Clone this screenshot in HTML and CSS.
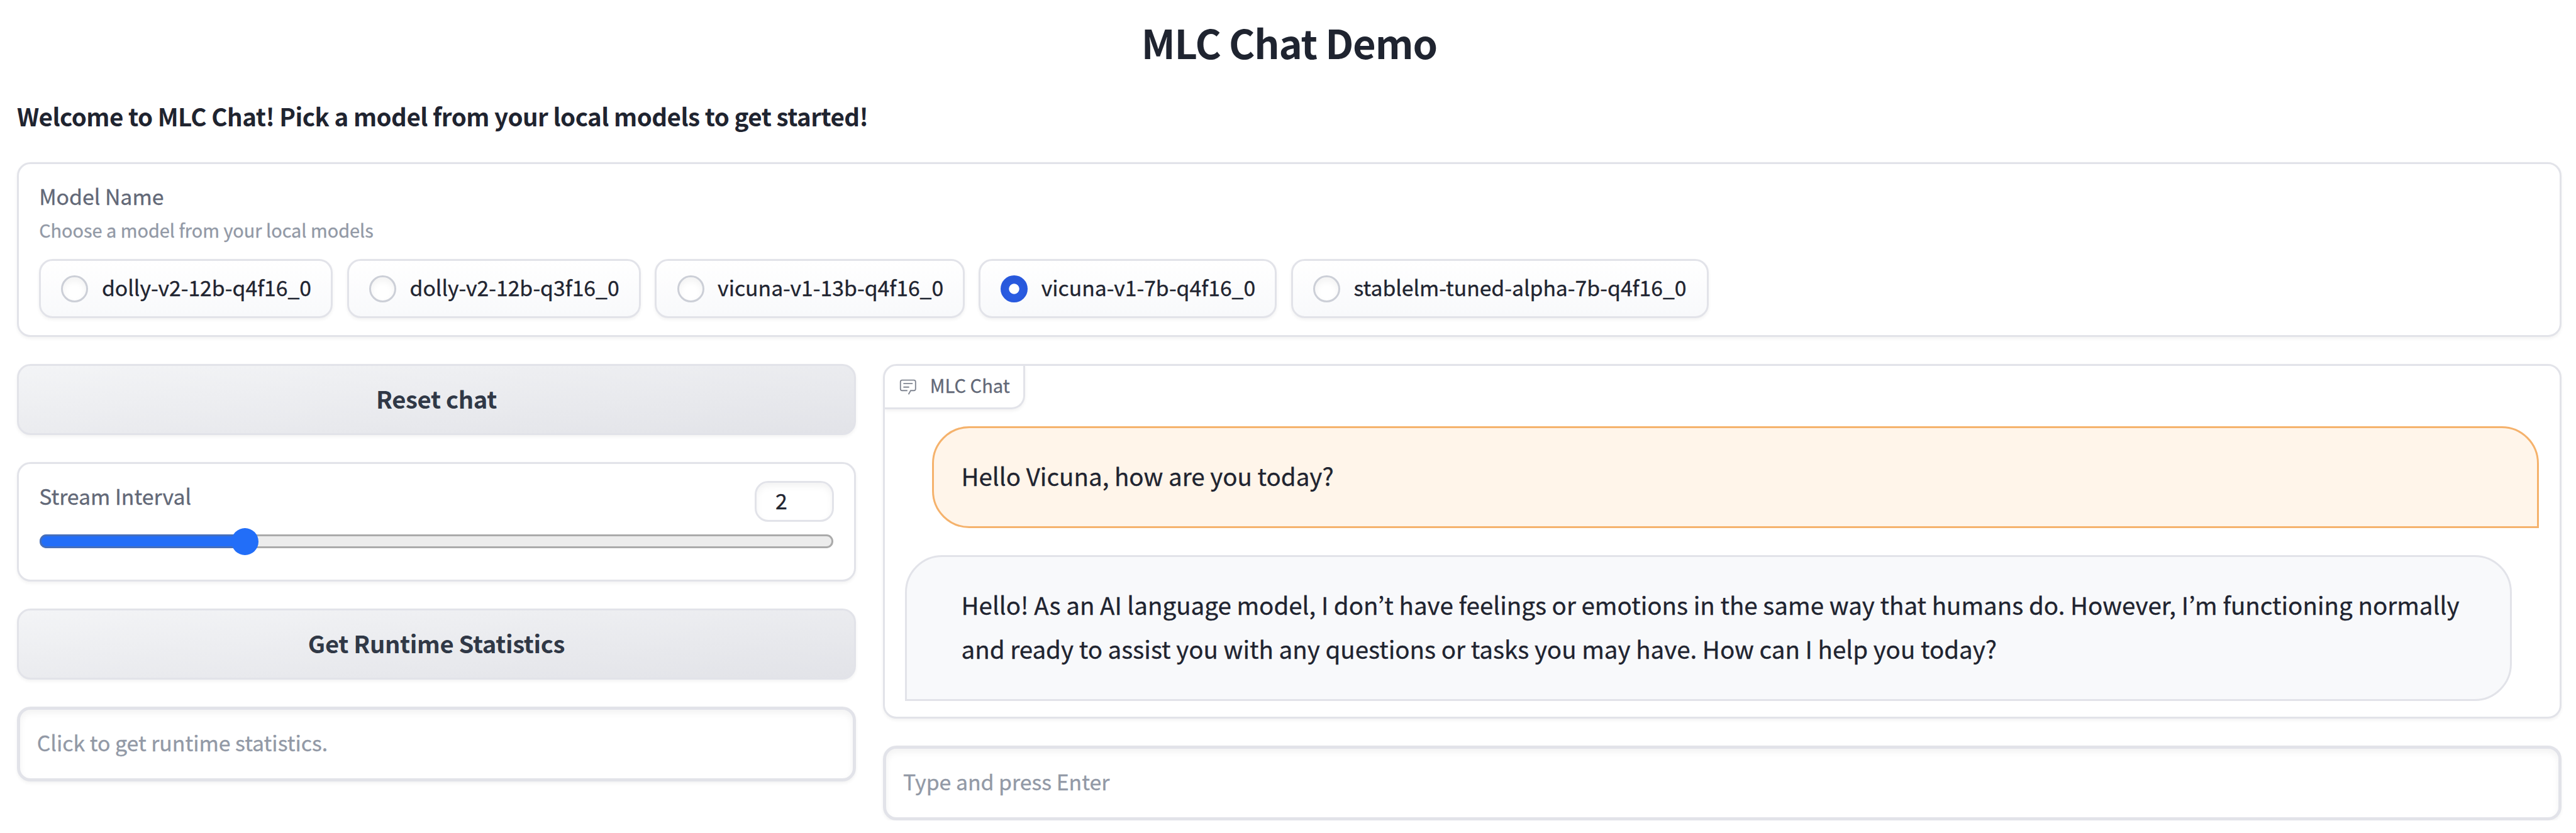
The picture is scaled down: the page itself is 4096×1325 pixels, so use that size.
FILE: index.html
```html
<!DOCTYPE html>
<html lang="en">
<head>
<meta charset="utf-8">
<title>MLC Chat Demo</title>
<link rel="stylesheet" href="styles.css">
</head>
<body>
<h1 class="title">MLC Chat Demo</h1>
<h3 class="welcome">Welcome to MLC Chat! Pick a model from your local models to get started!</h3>

<section class="panel models">
  <div class="label">Model Name</div>
  <div class="info">Choose a model from your local models</div>
  <div class="options">
    <div class="option w1"><span class="radio"></span><span class="name">dolly-v2-12b-q4f16_0</span></div>
    <div class="option w1"><span class="radio"></span><span class="name">dolly-v2-12b-q3f16_0</span></div>
    <div class="option w2"><span class="radio"></span><span class="name">vicuna-v1-13b-q4f16_0</span></div>
    <div class="option w3"><span class="radio checked"></span><span class="name">vicuna-v1-7b-q4f16_0</span></div>
    <div class="option w4"><span class="radio"></span><span class="name">stablelm-tuned-alpha-7b-q4f16_0</span></div>
  </div>
</section>

<main class="columns">
  <div class="side">
    <div class="button">Reset chat</div>
    <div class="panel slider">
      <div class="slider-head">
        <div class="label">Stream Interval</div>
        <div class="number">2</div>
      </div>
      <div class="track"><div class="fill"></div><div class="thumb"></div></div>
    </div>
    <div class="button">Get Runtime Statistics</div>
    <div class="textbox">Click to get runtime statistics.</div>
  </div>

  <div class="chat-col">
    <div class="panel chat">
      <div class="tag">
        <svg class="tag-icon" viewBox="0 0 32 32" fill="currentColor">
          <path d="M17.74 30L16 29l4-7h6a2 2 0 0 0 2-2V8a2 2 0 0 0-2-2H6a2 2 0 0 0-2 2v12a2 2 0 0 0 2 2h9v2H6a4 4 0 0 1-4-4V8a4 4 0 0 1 4-4h20a4 4 0 0 1 4 4v12a4 4 0 0 1-4 4h-4.84Z"/>
          <path d="M8 10h16v2H8zm0 6h10v2H8z"/>
        </svg>
        <span class="tag-text">MLC Chat</span>
      </div>
      <div class="messages">
        <div class="bubble user">Hello Vicuna, how are you today?</div>
        <div class="bubble bot">Hello! As an AI language model, I don’t have feelings or emotions in the same way that humans do. However, I’m functioning normally<br>and ready to assist you with any questions or tasks you may have. How can I help you today?</div>
      </div>
    </div>
    <div class="textbox">Type and press Enter</div>
  </div>
</main>
</body>
</html>
```
FILE: styles.css
```css
* { box-sizing: border-box; }

html { font-size: 8.96673px; }

body {
  margin: 0;
  padding: 2.2rem 2.6rem 0 3rem;
  background: #fff;
  color: #1f2430;
  font-family: "Noto Sans CJK KR", "Noto Sans", sans-serif;
  -webkit-text-stroke: 0.35px currentColor;
  overflow: hidden;
}

.title {
  margin: 0;
  font-size: 7.05rem;
  font-weight: 700;
  line-height: 10.4rem;
  letter-spacing: -0.13rem;
  text-align: center;
  -webkit-text-stroke: 0;
}

.welcome {
  margin: 5rem 0 5.2rem;
  font-size: 4.3rem;
  font-weight: 700;
  line-height: 6rem;
  letter-spacing: -0.06rem;
  -webkit-text-stroke: 0;
}

.panel {
  background: #fff;
  border: 3px solid #e2e3e9;
  border-radius: 2.4rem;
  box-shadow: 0 0.3rem 0.6rem rgb(0 0 0 / 0.05);
}

.label {
  color: #626877;
  font-size: 3.77rem;
  line-height: 5rem;
}

.models {
  height: 31rem;
  padding: 3.2rem 3.6rem 0;
}

.info {
  margin-top: 1.1rem;
  color: #9299a6;
  font-size: 3.22rem;
  line-height: 4.6rem;
}

.options {
  display: flex;
  gap: 2.5rem;
  margin-top: 2.95rem;
}

.option {
  display: flex;
  align-items: center;
  height: 10.5rem;
  padding-left: 3.6rem;
  border: 3px solid #e2e3e9;
  border-radius: 2.4rem;
  background: linear-gradient(to bottom, #fff, #f8f9fb);
  box-shadow: 0 0.3rem 0.6rem rgb(0 0 0 / 0.05);
  font-size: 3.76rem;
  white-space: nowrap;
}

.w1 { width: 52.1rem; }
.w2 { width: 54.9rem; }
.w3 { width: 52.9rem; }
.w4 { width: 74.1rem; }

.name {
  padding-bottom: 0.5rem;
  line-height: 5.4rem;
}

.radio {
  flex: none;
  width: 4.8rem;
  height: 4.8rem;
  margin-right: 2.4rem;
  border: 3px solid #cccfd7;
  border-radius: 50%;
  background: #fff;
  box-shadow: inset 0 0.6rem 1.2rem rgb(0 0 0 / 0.05);
}

.radio.checked {
  border-color: #2859de;
  background: radial-gradient(circle, #fff 0.86rem, #2a5ce2 0.96rem);
}

.columns {
  display: grid;
  grid-template-columns: 148.8rem 297.6rem;
  gap: 4.8rem;
  align-items: start;
  margin-top: 4.8rem;
}

.side,
.chat-col {
  display: flex;
  flex-direction: column;
  gap: 4.8rem;
}

.button {
  height: 12.6rem;
  border: 3px solid #e2e3e9;
  border-radius: 2.4rem;
  background: linear-gradient(to bottom right, #f3f4f6, #e2e3e8);
  box-shadow: 0 0.3rem 0.6rem rgb(0 0 0 / 0.05);
  color: #303846;
  font-size: 4.26rem;
  font-weight: 700;
  line-height: 11.5rem;
  letter-spacing: -0.04rem;
  text-align: center;
  -webkit-text-stroke: 0;
}

.slider {
  height: 21.2rem;
  padding: 3rem 3.6rem 0;
}

.slider-head {
  display: flex;
  justify-content: space-between;
  align-items: flex-start;
}

.slider-head .label { margin-top: 0.2rem; }

.number {
  width: 14rem;
  height: 7.2rem;
  padding-left: 3.3rem;
  border: 3px solid #e2e3e9;
  border-radius: 2.4rem;
  box-shadow: inset 0 0.6rem 1.2rem rgb(0 0 0 / 0.05);
  font-size: 3.78rem;
  line-height: 6.3rem;
}

.track {
  position: relative;
  height: 2.4rem;
  margin-top: 2.3rem;
  margin-left: 0.1rem;
  margin-right: 0.1rem;
  border: 3px solid #aaa;
  border-radius: 1.2rem;
  background: #ececec;
}

.fill {
  position: absolute;
  left: -3px;
  top: -3px;
  bottom: -3px;
  width: 36.4rem;
  border: 3px solid #456fbc;
  border-right: 0;
  border-radius: 1.2rem 0 0 1.2rem;
  background: #226ef8;
}

.thumb {
  position: absolute;
  left: calc(34rem - 3px);
  top: calc(-1.2rem - 3px);
  width: 4.8rem;
  height: 4.8rem;
  border-radius: 50%;
  background: #226ef8;
}

.textbox {
  height: 13.2rem;
  padding-left: 3rem;
  border: 0.6rem solid #e2e3e9;
  border-radius: 2.4rem;
  box-shadow: 0 0.3rem 0.6rem rgb(0 0 0 / 0.05), inset 0 0.6rem 1.2rem rgb(0 0 0 / 0.05);
  color: #9299a6;
  font-size: 3.77rem;
  line-height: 11.5rem;
}

.chat {
  height: 62.9rem;
  overflow: hidden;
}

.tag {
  display: flex;
  align-items: center;
  width: 24.8rem;
  height: 7.7rem;
  padding-left: 2.4rem;
  border: solid #e2e3e9;
  border-width: 0 3px 3px 0;
  border-bottom-right-radius: 2.4rem;
  box-shadow: 0 0.3rem 0.6rem rgb(0 0 0 / 0.05);
  color: #626877;
  font-size: 3.25rem;
  white-space: nowrap;
}

.tag-icon {
  width: 3.3rem;
  height: 3.3rem;
  margin-right: 2.3rem;
  opacity: 0.8;
}

.tag-text {
  padding-bottom: 0.5rem;
  line-height: 4.6rem;
}

.messages {
  display: flex;
  flex-direction: column;
  gap: 4.8rem;
  padding: 3rem 3.6rem 0;
}

.bubble {
  border: 3px solid;
  border-radius: 6.6rem;
  font-size: 4.297rem;
  line-height: 7.8rem;
  white-space: nowrap;
}

.user {
  margin-left: 4.8rem;
  padding: 4.6rem 4.8rem 5rem;
  border-color: #f5b26c;
  border-bottom-right-radius: 0;
  background: #fff5ea;
}

.bot {
  margin-right: 4.8rem;
  padding: 4.6rem 4.8rem 5rem 9.6rem;
  border-color: #e2e3e9;
  border-bottom-left-radius: 0;
  background: #f8f9fb;
}
```
